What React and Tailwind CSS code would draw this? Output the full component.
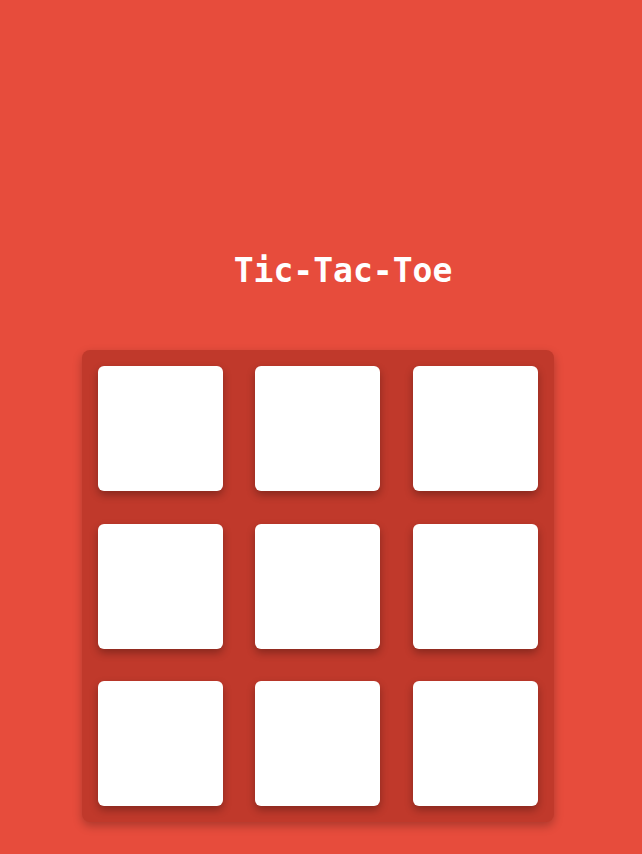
export default function App() {
  const cells = Array.from({ length: 9 });
  return (
    <div className="min-h-[854px] w-full bg-[#e74c3c] pt-[252px]">
      <h1 className="pl-[44px] text-center text-[33px] leading-[38px] font-bold text-white" style={{ fontFamily: '"DejaVu Sans Mono", monospace' }}>Tic-Tac-Toe</h1>
      <div className="ml-[82px] mt-[60px] w-[472px] rounded-lg bg-[#c0392b] p-4 shadow-[0_4px_10px_rgba(0,0,0,0.25)]">
        <div className="grid grid-cols-[125px_125px_125px] gap-x-[32.4px] gap-y-[32.5px]">
          {cells.map((_, i) => (
            <div key={i} className="h-[125px] w-[125px] rounded-md bg-white shadow-[0_4px_8px_rgba(0,0,0,0.3)]" />
          ))}
        </div>
      </div>
    </div>
  );
}
